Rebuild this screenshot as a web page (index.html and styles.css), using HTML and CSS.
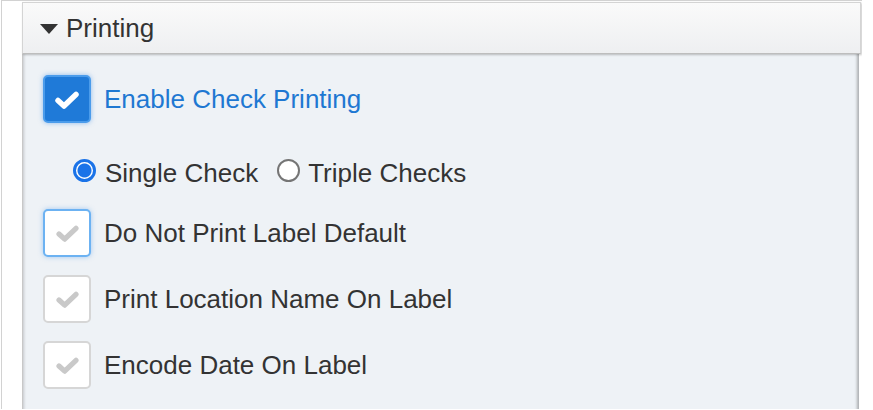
FILE: index.html
```html
<!DOCTYPE html>
<html>
<head>
<meta charset="utf-8">
<link rel="stylesheet" href="styles.css">
</head>
<body>
<div class="outer">
  <div class="panel">
    <div class="panel-head">
      <span class="caret"></span>
      <span class="title">Printing</span>
    </div>
    <div class="panel-body">
      <div class="row">
        <span class="cb cb-on">
          <svg viewBox="0 0 26 18" width="26" height="18"><polyline points="4,9.5 10,15 22,3.5" fill="none" stroke="#fff" stroke-width="5.5" stroke-linecap="round" stroke-linejoin="round"/></svg>
        </span>
        <span class="label label-blue">Enable Check Printing</span>
      </div>
      <div class="radios">
        <span class="radio radio-on"></span>
        <span class="rlabel">Single Check</span>
        <span class="radio"></span>
        <span class="rlabel">Triple Checks</span>
      </div>
      <div class="row row-first">
        <span class="cb cb-focus">
          <svg viewBox="0 0 26 18" width="25" height="17"><polyline points="4,9.5 10,15 22,3.5" fill="none" stroke="#c9c9c9" stroke-width="5.5" stroke-linecap="round" stroke-linejoin="round"/></svg>
        </span>
        <span class="label">Do Not Print Label Default</span>
      </div>
      <div class="row">
        <span class="cb">
          <svg viewBox="0 0 26 18" width="25" height="17"><polyline points="4,9.5 10,15 22,3.5" fill="none" stroke="#c9c9c9" stroke-width="5.5" stroke-linecap="round" stroke-linejoin="round"/></svg>
        </span>
        <span class="label">Print Location Name On Label</span>
      </div>
      <div class="row">
        <span class="cb">
          <svg viewBox="0 0 26 18" width="25" height="17"><polyline points="4,9.5 10,15 22,3.5" fill="none" stroke="#c9c9c9" stroke-width="5.5" stroke-linecap="round" stroke-linejoin="round"/></svg>
        </span>
        <span class="label">Encode Date On Label</span>
      </div>
    </div>
  </div>
</div>
</body>
</html>
```

FILE: styles.css
```css
html, body {
  margin: 0;
  padding: 0;
  background: #ffffff;
  font-family: "Liberation Sans", Arial, sans-serif;
  color: #333;
}
.outer {
  margin-left: 1px;
  width: 861px;
  height: 409px;
  border-left: 1px solid #d2d2d2;
  border-top: 1px solid #d2d2d2;
  padding: 1px 0 0 20px;
  box-sizing: border-box;
  overflow: hidden;
}
.panel {
  width: 839px;
  display: flex;
  flex-direction: column;
}
.panel-head {
  height: 52px;
  box-sizing: border-box;
  border: 1px solid #d4d4d4;
  border-bottom: 1px solid #bdbdbd;
  background: linear-gradient(#fafafa, #eeeff1);
  box-shadow: 1px 1px 2px rgba(0,0,0,0.22);
  display: flex;
  align-items: center;
  padding-left: 17px;
  position: relative;
  z-index: 1;
}
.caret {
  width: 0;
  height: 0;
  border-left: 9px solid transparent;
  border-right: 9px solid transparent;
  border-top: 10px solid #333;
  margin-right: 8px;
  margin-top: 1px;
}
.title {
  font-size: 26px;
  color: #333;
}
.panel-body {
  background: #eef2f6;
  border-left: 1px solid #c8c8c8;
  box-shadow: inset 3px 0 3px -2px rgba(0,0,0,0.18), inset -4px 0 3px -2px rgba(0,0,0,0.28);
  padding: 21px 0 30px 20px;
  height: 360px;
  box-sizing: border-box;
  margin-right: 2px;
}
.row {
  display: flex;
  align-items: center;
  margin-bottom: 18px;
}
.cb {
  width: 48px;
  height: 48px;
  box-sizing: border-box;
  border: 2px solid #d6d6d6;
  border-radius: 5px;
  background: #fff;
  display: flex;
  align-items: center;
  justify-content: center;
  flex: none;
}
.cb-on {
  background: #1f7ad8;
  border: 2px solid #4b9ceb;
  box-shadow: 0 0 5px rgba(60,140,230,0.55);
}
.cb-on svg { margin-top: 1px; }
.cb-focus {
  border: 2px solid #6cb2f2;
  box-shadow: 0 0 5px rgba(90,160,235,0.5);
}
.label {
  font-size: 26px;
  margin-left: 13px;
  color: #333;
}
.label-blue {
  color: #1e78d2;
}
.radios {
  display: flex;
  align-items: center;
  margin: 38px 0 0 30px;
  height: 24px;
}
.radio {
  width: 23px;
  height: 23px;
  box-sizing: border-box;
  border: 2px solid #757575;
  border-radius: 50%;
  background: #fff;
  flex: none;
  margin-right: 9px;
  margin-top: -5px;
}
.radio-on {
  border: 3px solid #1a73e8;
  background: radial-gradient(circle, #1a73e8 0 6.5px, #fff 7.5px);
}
.rlabel {
  font-size: 26px;
  color: #333;
  margin-right: 19px;
}
.rlabel + .radio {
  margin-right: 8px;
}
.row-first {
  margin-top: 24px;
}
```
